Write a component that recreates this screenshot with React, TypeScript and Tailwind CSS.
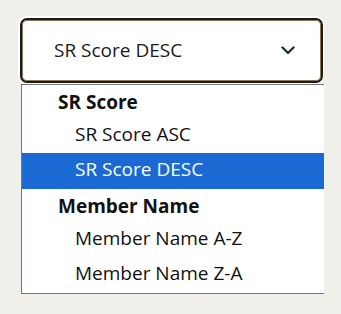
import { ReactNode } from "react";

type Option = { label: string; selected?: boolean };
type Group = { label: string; options: Option[] };

const groups: Group[] = [
  {
    label: "SR Score",
    options: [{ label: "SR Score ASC" }, { label: "SR Score DESC", selected: true }],
  },
  {
    label: "Member Name",
    options: [{ label: "Member Name A-Z" }, { label: "Member Name Z-A" }],
  },
];

const GroupHeader = ({ children }: { children: ReactNode }) => (
  <div className="h-[33px] pl-[36px] pt-[4px] text-[19px] font-bold leading-[26px] text-[#111]">
    {children}
  </div>
);

const OptionRow = ({ option, last }: { option: Option; last?: boolean }) => (
  <div
    className={
      (last || option.selected ? "h-[36px] " : "h-[35px] ") +
      (option.selected ? "bg-[#1b69d3] text-white " : "text-[#111] ") +
      "pl-[53px] pt-[3px] text-[19px] leading-[26px]"
    }
  >
    {option.label}
  </div>
);

export default function App() {
  return (
    <div
      className="min-h-[314px] bg-[#f0efea] pl-[18px] pt-4"
      style={{ fontFamily: '"Open Sans", "Noto Sans", sans-serif' }}
    >
      <div className="w-[306px]">
        <div className="rounded-[9px] bg-white pb-[1px] pl-[2px] pr-[1px] pt-[2px]">
          <div className="flex h-[65px] items-center justify-between rounded-[7px] border-2 border-[#1c1c1c] pl-[32px] pr-[26px] shadow-[inset_0_0_0_1px_#8d7356]">
            <span className="text-[19px] text-[#1a1a1a]">SR Score DESC</span>
            <svg width="14" height="9" viewBox="0 0 14 9" fill="none">
              <path
                d="M1.5 1.5 L7 7 L12.5 1.5"
                stroke="#1f3526"
                strokeWidth="2.4"
                strokeLinecap="round"
                strokeLinejoin="round"
              />
            </svg>
          </div>
        </div>

        <div className="ml-[3px] w-[303px] border-b border-l border-t border-[#777] bg-white">
          {groups.map((g, gi) => (
            <div key={g.label}>
              <GroupHeader>{g.label}</GroupHeader>
              {g.options.map((o, oi) => (
                <OptionRow
                  key={o.label}
                  option={o}
                  last={gi === groups.length - 1 && oi === g.options.length - 1}
                />
              ))}
            </div>
          ))}
        </div>
      </div>
    </div>
  );
}
